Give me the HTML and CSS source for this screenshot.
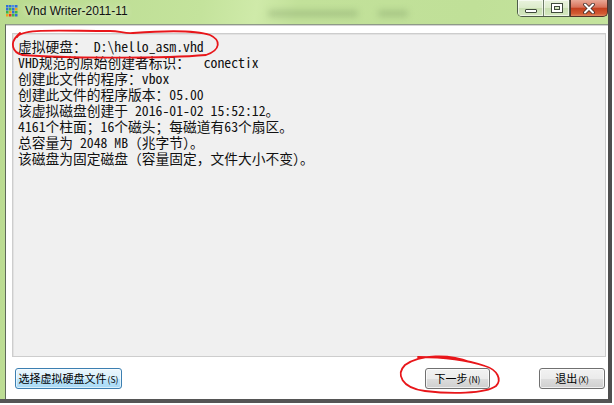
FILE: index.html
```html
<!DOCTYPE html>
<html lang="zh-CN">
<head>
    <meta charset="UTF-8">
    <meta name="viewport" content="width=device-width, initial-scale=1.0">
    <title>Vhd Writer-2011-11</title>
    <link rel="stylesheet" href="styles.css">
</head>
<body>
    <div class="window">
        <div class="titlebar">
            <svg class="app-icon" width="12" height="12" viewBox="0 0 12 12">
                <rect x="0" y="0" width="2.5" height="2.5" fill="#2f6fd8"/>
                <rect x="3" y="0" width="2.5" height="2.5" fill="#2f6fd8"/>
                <rect x="6" y="0" width="2.5" height="2.5" fill="#4a8be8"/>
                <rect x="9" y="0" width="2.5" height="2.5" fill="#2f6fd8"/>
                <rect x="0" y="3" width="2.5" height="2.5" fill="#2f6fd8"/>
                <rect x="3" y="3" width="2.5" height="2.5" fill="#3cb44a"/>
                <rect x="6" y="3" width="2.5" height="2.5" fill="#2f6fd8"/>
                <rect x="9" y="3" width="2.5" height="2.5" fill="#f0a020"/>
                <rect x="0" y="6" width="2.5" height="2.5" fill="#3cb44a"/>
                <rect x="3" y="6" width="2.5" height="2.5" fill="#f0a020"/>
                <rect x="6" y="6" width="2.5" height="2.5" fill="#2f6fd8"/>
                <rect x="9" y="6" width="2.5" height="2.5" fill="#3cb44a"/>
                <rect x="0" y="9" width="2.5" height="2.5" fill="#f0a020"/>
                <rect x="3" y="9" width="2.5" height="2.5" fill="#e03a2a"/>
                <rect x="6" y="9" width="2.5" height="2.5" fill="#3cb44a"/>
                <rect x="9" y="9" width="2.5" height="2.5" fill="#2f6fd8"/>
            </svg>
            <span class="title">Vhd Writer-2011-11</span>
            <span class="glass-blur wide"></span>
            <span class="glass-blur"></span>
            <div class="caption">
                <div class="cap-group">
                    <div class="cap min"><span class="min-bar"></span></div>
                    <div class="cap max"><span class="max-box"></span></div>
                </div>
                <div class="cap close">
                    <svg width="12" height="11" viewBox="0 0 12 11">
                        <path d="M2 1.5 L10 9.5 M10 1.5 L2 9.5" stroke="#3b2a26" stroke-width="3.6" stroke-linecap="round"/>
                        <path d="M2 1.5 L10 9.5 M10 1.5 L2 9.5" stroke="#fff" stroke-width="2" stroke-linecap="round"/>
                    </svg>
                </div>
            </div>
        </div>

        <div class="client">
            <div class="info">
                <div class="line">虚拟硬盘： D:\hello_asm.vhd</div>
                <div class="line">VHD规范的原始创建者标识：  conectix</div>
                <div class="line">创建此文件的程序：vbox</div>
                <div class="line">创建此文件的程序版本：05.00</div>
                <div class="line">该虚拟磁盘创建于 2016-01-02 15:52:12。</div>
                <div class="line">4161个柱面；16个磁头；每磁道有63个扇区。</div>
                <div class="line">总容量为 2048 MB（兆字节）。</div>
                <div class="line">该磁盘为固定磁盘（容量固定，文件大小不变）。</div>
            </div>
            <div class="actions">
                <button class="btn btn-default">选择虚拟硬盘文件<small>(S)</small></button>
                <button class="btn btn-next">下一步<small>(N)</small></button>
                <button class="btn btn-exit">退出<small>(X)</small></button>
            </div>
        </div>
    </div>

    <!-- red pen marks drawn over the screenshot -->
    <svg class="marks" width="614" height="405" viewBox="0 0 614 405">
        <path d="M17 37 C22 28 60 31 110 31 C120 31 125 34 133 33 C160 31 195 30 210 35 C221 40 221 50 206 55 C160 59 60 58 22 55 C12 52 10 43 17 36 L20 33"
              fill="none" stroke="#e8161a" stroke-width="1.8" stroke-linecap="round"/>
        <path d="M470 362 C450 354 420 354 405 365 C396 374 401 388 425 391 C450 394 485 394 496 386 C502 380 498 370 485 366 C470 361 445 357 418 357"
              fill="none" stroke="#e8161a" stroke-width="1.8" stroke-linecap="round"/>
    </svg>
</body>
</html>
```

FILE: styles.css
```css
body {
    margin: 0;
    width: 614px;
    height: 405px;
    background: #fff;
    position: relative;
    overflow: hidden;
    font-family: "Noto Sans Mono CJK SC", "Noto Sans CJK SC", sans-serif;
}
.window {
    box-sizing: border-box;
    width: 612px;
    height: 403px;
    padding-left: 5px;
    border-right: 4px solid #4f4f4f;
    border-bottom: 4px solid #555;
    background: linear-gradient(100deg, #b9da8f 0%, #c4e39c 30%, #cfeaa9 38%, #c2e19a 44%, #c0e098 70%, #c7e5a0 100%);
    display: flex;
    flex-direction: column;
}
.titlebar {
    height: 24px;
    display: flex;
    align-items: flex-start;
}
.app-icon {
    margin: 5px 0 0 1px;
}
.title {
    margin: 4px 0 0 7px;
    font-family: "Liberation Sans", Arial, sans-serif;
    font-size: 12px;
    line-height: 14px;
    color: #111;
    text-shadow: 0 0 6px rgba(255, 255, 255, 0.9);
}
.glass-blur {
    width: 30px;
    height: 7px;
    margin: 10px 0 0 20px;
    background: rgba(110, 140, 90, 0.3);
    border-radius: 3px;
    filter: blur(3px);
}
.glass-blur.wide {
    width: 90px;
    margin-left: 140px;
}
.caption {
    margin-left: auto;
    display: flex;
}
.cap-group {
    display: flex;
    border: 1px solid #4e5b49;
    border-top: none;
    border-radius: 0 0 0 5px;
    overflow: hidden;
}
.cap {
    height: 16px;
    display: flex;
    align-items: center;
    justify-content: center;
    background: linear-gradient(#e9f3dd 0%, #dcebcb 50%, #c9dfb2 51%, #d5e8c0 100%);
    box-shadow: inset 0 0 0 1px rgba(255, 255, 255, 0.6);
}
.min {
    width: 25px;
    border-right: 1px solid #6e7d68;
}
.max {
    width: 25px;
}
.min-bar {
    width: 10px;
    height: 2px;
    margin-top: 6px;
    background: #fff;
    border: 1px solid #3f4a3b;
    border-radius: 1px;
}
.max-box {
    width: 6px;
    height: 4px;
    border: 2px solid #fff;
    outline: 1px solid #3f4a3b;
    box-shadow: inset 0 0 0 1px #3f4a3b;
}
.close {
    width: 36px;
    height: 16px;
    border: 1px solid #52332a;
    border-top: none;
    border-radius: 0 0 5px 0;
    background: linear-gradient(#e9a896 0%, #d8725a 45%, #c4401f 52%, #d25a33 85%, #e0895f 100%);
    box-shadow: none;
}
.client {
    flex: 1;
    display: flex;
    flex-direction: column;
    background: #fff;
    border-left: 1px solid #5f6b5a;
    border-top: 1px solid #8e9a88;
    box-shadow: inset 0 1px 0 #d4d4d4;
    padding: 8px 2px 10px 6px;
}
.info {
    height: 324px;
    box-sizing: border-box;
    background: #f0f0f0;
    border: 1px solid #cdcdcd;
    box-shadow: inset 1px 1px 0 #e2e2e2;
    padding: 4px 5px;
    font-size: 13.75px;
    line-height: 16px;
    color: #111;
}
.line {
    white-space: pre;
}
.actions {
    display: flex;
    margin-top: 11px;
    padding: 0 1px 0 3px;
}
.btn {
    height: 21px;
    padding: 0;
    box-sizing: border-box;
    font-family: "Noto Sans CJK SC", sans-serif;
    font-size: 11px;
    line-height: 17px;
    color: #000;
    border: 1px solid #707070;
    border-radius: 3px;
    background: linear-gradient(#f2f2f2 0%, #ebebeb 50%, #dddddd 51%, #cfcfcf 100%);
    box-shadow: inset 0 0 0 1px rgba(255, 255, 255, 0.7);
}
.btn small {
    font-size: 8.5px;
    margin-left: 1px;
}
.btn-default {
    width: 107px;
    border-color: #3c7fb1;
    background: linear-gradient(#eaf6fd 0%, #d9f0fc 50%, #bee6fd 51%, #a7d9f5 100%);
    box-shadow: inset 0 0 0 1px rgba(255, 255, 255, 0.6);
}
.btn-next {
    width: 65px;
    margin-left: auto;
}
.btn-exit {
    width: 66px;
    margin-left: 49px;
}
.marks {
    position: absolute;
    left: 0;
    top: 0;
    pointer-events: none;
}
```
